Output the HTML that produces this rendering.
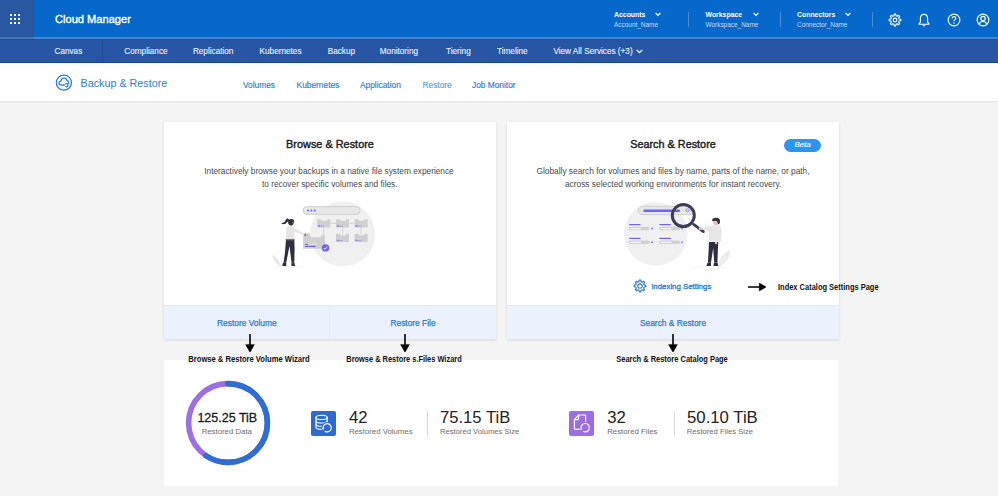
<!DOCTYPE html>
<html><head><meta charset="utf-8"><style>
html,body{margin:0;padding:0;width:998px;height:496px;overflow:hidden;background:#f4f4f4;position:relative;font-family:"Liberation Sans",sans-serif;}
div{font-family:"Liberation Sans",sans-serif;}
</style></head><body>
<div style="position:absolute;left:0px;top:0px;width:998px;height:37px;background:#0668cb;"></div>
<div style="position:absolute;left:0px;top:37px;width:998px;height:2px;background:#3f86d4;"></div>
<div style="position:absolute;left:0px;top:0px;width:34px;height:37px;background:#2a57a1;"></div>
<div style="position:absolute;left:0px;top:37px;width:34px;height:2px;background:#4a74b0;"></div>
<div style="position:absolute;left:10px;top:14px;width:2.2px;height:2.2px;background:#fff;border-radius:0.3px;"></div>
<div style="position:absolute;left:10px;top:18px;width:2.2px;height:2.2px;background:#fff;border-radius:0.3px;"></div>
<div style="position:absolute;left:10px;top:22px;width:2.2px;height:2.2px;background:#fff;border-radius:0.3px;"></div>
<div style="position:absolute;left:14px;top:14px;width:2.2px;height:2.2px;background:#fff;border-radius:0.3px;"></div>
<div style="position:absolute;left:14px;top:18px;width:2.2px;height:2.2px;background:#fff;border-radius:0.3px;"></div>
<div style="position:absolute;left:14px;top:22px;width:2.2px;height:2.2px;background:#fff;border-radius:0.3px;"></div>
<div style="position:absolute;left:18px;top:14px;width:2.2px;height:2.2px;background:#fff;border-radius:0.3px;"></div>
<div style="position:absolute;left:18px;top:18px;width:2.2px;height:2.2px;background:#fff;border-radius:0.3px;"></div>
<div style="position:absolute;left:18px;top:22px;width:2.2px;height:2.2px;background:#fff;border-radius:0.3px;"></div>
<div style="position:absolute;top:14.00px;font-size:11.1px;line-height:11.1px;color:#fff;font-weight:normal;white-space:nowrap;left:55.00px;-webkit-text-stroke:0.35px #fff;">Cloud Manager</div>
<div style="position:absolute;top:11.66px;font-size:6.9px;line-height:6.9px;color:#fff;font-weight:bold;white-space:nowrap;left:614.00px;">Accounts</div>
<div style="position:absolute;top:22.14px;font-size:6.45px;line-height:6.45px;color:#c9dcf3;font-weight:normal;white-space:nowrap;left:614.00px;">Account_Name</div>
<svg style="position:absolute;left:654.5px;top:11.5px" width="6" height="5" viewBox="0 0 6 5"><path d="M0.6 1 L3 3.4 L5.4 1" fill="none" stroke="#fff" stroke-width="1.2"/></svg>
<div style="position:absolute;top:11.66px;font-size:6.9px;line-height:6.9px;color:#fff;font-weight:bold;white-space:nowrap;left:705.50px;">Workspace</div>
<div style="position:absolute;top:22.14px;font-size:6.45px;line-height:6.45px;color:#c9dcf3;font-weight:normal;white-space:nowrap;left:705.50px;">Workspace_Name</div>
<svg style="position:absolute;left:752.5px;top:11.5px" width="6" height="5" viewBox="0 0 6 5"><path d="M0.6 1 L3 3.4 L5.4 1" fill="none" stroke="#fff" stroke-width="1.2"/></svg>
<div style="position:absolute;top:11.66px;font-size:6.9px;line-height:6.9px;color:#fff;font-weight:bold;white-space:nowrap;left:797.00px;">Connectors</div>
<div style="position:absolute;top:22.14px;font-size:6.45px;line-height:6.45px;color:#c9dcf3;font-weight:normal;white-space:nowrap;left:797.00px;">Connector_Name</div>
<svg style="position:absolute;left:845px;top:11.5px" width="6" height="5" viewBox="0 0 6 5"><path d="M0.6 1 L3 3.4 L5.4 1" fill="none" stroke="#fff" stroke-width="1.2"/></svg>
<div style="position:absolute;left:688px;top:12px;width:1px;height:15px;background:#4f8bd3;"></div>
<div style="position:absolute;left:780px;top:12px;width:1px;height:15px;background:#4f8bd3;"></div>
<div style="position:absolute;left:871.5px;top:12px;width:1px;height:15px;background:#4f8bd3;"></div>
<svg style="position:absolute;left:886.8px;top:11.7px" width="16" height="16" viewBox="-8 -8 16 16"><path d="M-1.07 -4.16 L-0.78 -5.85 L0.78 -5.85 L1.07 -4.16 L2.19 -3.70 L3.58 -4.69 L4.69 -3.58 L3.70 -2.19 L4.16 -1.07 L5.85 -0.78 L5.85 0.78 L4.16 1.07 L3.70 2.19 L4.69 3.58 L3.58 4.69 L2.19 3.70 L1.07 4.16 L0.78 5.85 L-0.78 5.85 L-1.07 4.16 L-2.19 3.70 L-3.58 4.69 L-4.69 3.58 L-3.70 2.19 L-4.16 1.07 L-5.85 0.78 L-5.85 -0.78 L-4.16 -1.07 L-3.70 -2.19 L-4.69 -3.58 L-3.58 -4.69 L-2.19 -3.70 Z" fill="none" stroke="#fff" stroke-width="1.1" stroke-linejoin="round"/><circle cx="0" cy="0" r="1.9" fill="none" stroke="#fff" stroke-width="1.1"/></svg>
<svg style="position:absolute;left:916.3px;top:11.7px" width="16" height="16" viewBox="-8 -8 16 16"><path d="M0 -5.6 C-2.6 -5.6 -3.6 -3.6 -3.6 -1.3 V1.8 C-3.6 2.6 -4.4 3.2 -5 3.6 V4.2 H5 V3.6 C4.4 3.2 3.6 2.6 3.6 1.8 V-1.3 C3.6 -3.6 2.6 -5.6 0 -5.6 Z" fill="none" stroke="#fff" stroke-width="1.1" stroke-linejoin="round"/><path d="M-1.3 5.4 Q0 6.6 1.3 5.4" fill="none" stroke="#fff" stroke-width="1"/><path d="M0 -6.3 V-5.6" stroke="#fff" stroke-width="1"/></svg>
<svg style="position:absolute;left:945.5px;top:11.7px" width="16" height="16" viewBox="-8 -8 16 16"><circle cx="0" cy="0" r="5.85" fill="none" stroke="#fff" stroke-width="1.1"/><path d="M-1.8 -1.5 C-1.8 -2.8 -1 -3.4 0 -3.4 C1 -3.4 1.8 -2.8 1.8 -1.7 C1.8 -0.4 0 -0.2 0 1.2" fill="none" stroke="#fff" stroke-width="1.05"/><circle cx="0" cy="3" r="0.65" fill="#fff"/></svg>
<svg style="position:absolute;left:974.7px;top:11.7px" width="16" height="16" viewBox="-8 -8 16 16"><circle cx="0" cy="0" r="5.85" fill="none" stroke="#fff" stroke-width="1.15"/><circle cx="0" cy="-1.5" r="2.2" fill="none" stroke="#fff" stroke-width="1.15"/><path d="M-3.9 4.3 C-3.2 2.4 -1.8 1.5 0 1.5 C1.8 1.5 3.2 2.4 3.9 4.3" fill="none" stroke="#fff" stroke-width="1.15"/></svg>
<div style="position:absolute;left:0px;top:39px;width:998px;height:24px;background:#2757a4;"></div>
<div style="position:absolute;left:0px;top:39px;width:998px;height:1px;background:#1f4f9b;"></div>
<div style="position:absolute;left:0px;top:62px;width:998px;height:1px;background:#13439a;"></div>
<div style="position:absolute;left:102px;top:39px;width:1px;height:23px;background:#1e4c93;"></div>
<div style="position:absolute;top:47.86px;font-size:8.2px;line-height:8.2px;color:#e9f0fa;font-weight:normal;white-space:nowrap;left:54.50px;-webkit-text-stroke:0.12px #e9f0fa;">Canvas</div>
<div style="position:absolute;top:47.86px;font-size:8.2px;line-height:8.2px;color:#e9f0fa;font-weight:normal;white-space:nowrap;left:124.30px;-webkit-text-stroke:0.12px #e9f0fa;">Compliance</div>
<div style="position:absolute;top:47.86px;font-size:8.2px;line-height:8.2px;color:#e9f0fa;font-weight:normal;white-space:nowrap;left:192.90px;-webkit-text-stroke:0.12px #e9f0fa;">Replication</div>
<div style="position:absolute;top:47.86px;font-size:8.2px;line-height:8.2px;color:#e9f0fa;font-weight:normal;white-space:nowrap;left:259.60px;-webkit-text-stroke:0.12px #e9f0fa;">Kubernetes</div>
<div style="position:absolute;top:47.86px;font-size:8.2px;line-height:8.2px;color:#e9f0fa;font-weight:normal;white-space:nowrap;left:327.70px;-webkit-text-stroke:0.12px #e9f0fa;">Backup</div>
<div style="position:absolute;top:47.86px;font-size:8.2px;line-height:8.2px;color:#e9f0fa;font-weight:normal;white-space:nowrap;left:379.80px;-webkit-text-stroke:0.12px #e9f0fa;">Monitoring</div>
<div style="position:absolute;top:47.86px;font-size:8.2px;line-height:8.2px;color:#e9f0fa;font-weight:normal;white-space:nowrap;left:446.00px;-webkit-text-stroke:0.12px #e9f0fa;">Tiering</div>
<div style="position:absolute;top:47.86px;font-size:8.2px;line-height:8.2px;color:#e9f0fa;font-weight:normal;white-space:nowrap;left:497.00px;-webkit-text-stroke:0.12px #e9f0fa;">Timeline</div>
<div style="position:absolute;top:47.86px;font-size:8.2px;line-height:8.2px;color:#e9f0fa;font-weight:normal;white-space:nowrap;left:553.40px;-webkit-text-stroke:0.12px #e9f0fa;">View All Services (+3)</div>
<svg style="position:absolute;left:636px;top:48.5px" width="7" height="5" viewBox="0 0 7 5"><path d="M0.7 0.9 L3.5 3.7 L6.3 0.9" fill="none" stroke="#fff" stroke-width="1.3"/></svg>
<div style="position:absolute;left:0px;top:63px;width:998px;height:38px;background:#fff;box-shadow:0 1px 2px rgba(0,0,0,0.08);"></div>
<svg style="position:absolute;left:54.5px;top:73.5px" width="18" height="18" viewBox="54.5 73.5 18 18"><g fill="none" stroke="#2d7dd6" stroke-width="1.25" stroke-linecap="round"><circle cx="63.4" cy="82.2" r="7.55"/><path d="M63.3 84.6 H60.6 C59.3 84.6 58.5 83.7 58.5 82.6 C58.5 81.5 59.3 80.7 60.3 80.6 C60.6 78.8 61.8 77.5 63.4 77.5 C65 77.5 66.2 78.6 66.5 80.1 C67.5 80.2 68.2 81 68.2 82 C68.2 82.5 68 82.9 67.6 83.2"/><path d="M64.9 83.4 A1.6 1.6 0 1 1 65.3 86.2"/></g><circle cx="63.5" cy="84.6" r="0.85" fill="#2d7dd6"/></svg>
<div style="position:absolute;top:78.40px;font-size:10.75px;line-height:10.75px;color:#2d7dd6;font-weight:normal;white-space:nowrap;left:80.60px;">Backup &amp; Restore</div>
<div style="position:absolute;top:81.23px;font-size:8.35px;line-height:8.35px;color:#2f7bd2;font-weight:normal;white-space:nowrap;left:243.00px;-webkit-text-stroke:0.15px #2f7bd2;">Volumes</div>
<div style="position:absolute;top:81.23px;font-size:8.35px;line-height:8.35px;color:#2f7bd2;font-weight:normal;white-space:nowrap;left:296.60px;-webkit-text-stroke:0.15px #2f7bd2;">Kubernetes</div>
<div style="position:absolute;top:81.23px;font-size:8.35px;line-height:8.35px;color:#2f7bd2;font-weight:normal;white-space:nowrap;left:360.00px;-webkit-text-stroke:0.15px #2f7bd2;">Application</div>
<div style="position:absolute;top:81.23px;font-size:8.35px;line-height:8.35px;color:#55a1ea;font-weight:normal;white-space:nowrap;left:422.50px;-webkit-text-stroke:0.15px #55a1ea;">Restore</div>
<div style="position:absolute;top:81.23px;font-size:8.35px;line-height:8.35px;color:#2f7bd2;font-weight:normal;white-space:nowrap;left:472.00px;-webkit-text-stroke:0.15px #2f7bd2;">Job Monitor</div>
<div style="position:absolute;left:164px;top:122px;width:332px;height:217px;background:#fff;box-shadow:0 1px 3px rgba(0,0,0,0.12);"></div>
<div style="position:absolute;left:164px;top:305px;width:332px;height:34px;background:#ebf2fd;border-top:1px solid #e2e6ee;box-sizing:border-box;"></div>
<div style="position:absolute;left:507px;top:122px;width:332px;height:217px;background:#fff;box-shadow:0 1px 3px rgba(0,0,0,0.12);"></div>
<div style="position:absolute;left:507px;top:305px;width:332px;height:34px;background:#ebf2fd;border-top:1px solid #e2e6ee;box-sizing:border-box;"></div>
<div style="position:absolute;left:328.8px;top:306px;width:1.6px;height:33px;background:#e4e7ec;"></div>
<div style="position:absolute;top:139.17px;font-size:10.9px;line-height:10.9px;color:#1b1b1b;font-weight:normal;white-space:nowrap;left:180.00px;width:300px;text-align:center;-webkit-text-stroke:0.4px #1b1b1b;">Browse &amp; Restore</div>
<div style="position:absolute;top:167.37px;font-size:8.3px;line-height:8.3px;color:#4a4a4a;font-weight:normal;white-space:nowrap;left:164.00px;width:330px;text-align:center;">Interactively browse your backups in a native file system experience</div>
<div style="position:absolute;top:179.97px;font-size:8.3px;line-height:8.3px;color:#4a4a4a;font-weight:normal;white-space:nowrap;left:164.80px;width:330px;text-align:center;">to recover specific volumes and files.</div>
<div style="position:absolute;top:139.21px;font-size:10.85px;line-height:10.85px;color:#1b1b1b;font-weight:normal;white-space:nowrap;left:523.00px;width:300px;text-align:center;-webkit-text-stroke:0.4px #1b1b1b;">Search &amp; Restore</div>
<div style="position:absolute;left:784px;top:139px;width:36.5px;height:12.6px;background:#2c95f1;border-radius:7px;"></div>
<div style="position:absolute;top:141.41px;font-size:7.9px;line-height:7.9px;color:#fff;font-weight:normal;white-space:nowrap;left:782.50px;width:40px;text-align:center;font-style:italic;-webkit-text-stroke:0.1px #fff;">Beta</div>
<div style="position:absolute;top:167.33px;font-size:8.35px;line-height:8.35px;color:#4a4a4a;font-weight:normal;white-space:nowrap;left:508.00px;width:330px;text-align:center;">Globally search for volumes and files by name, parts of the name, or path,</div>
<div style="position:absolute;top:179.93px;font-size:8.35px;line-height:8.35px;color:#4a4a4a;font-weight:normal;white-space:nowrap;left:508.20px;width:330px;text-align:center;">across selected working environments for instant recovery.</div>
<div style="position:absolute;top:318.79px;font-size:8.4px;line-height:8.4px;color:#2e7dd4;font-weight:normal;white-space:nowrap;left:186.80px;width:120px;text-align:center;-webkit-text-stroke:0.25px #2a79d2;">Restore Volume</div>
<div style="position:absolute;top:318.79px;font-size:8.4px;line-height:8.4px;color:#2e7dd4;font-weight:normal;white-space:nowrap;left:353.00px;width:120px;text-align:center;-webkit-text-stroke:0.25px #2a79d2;">Restore File</div>
<div style="position:absolute;top:318.79px;font-size:8.4px;line-height:8.4px;color:#2e7dd4;font-weight:normal;white-space:nowrap;left:613.00px;width:120px;text-align:center;-webkit-text-stroke:0.25px #2a79d2;">Search &amp; Restore</div>
<svg style="position:absolute;left:631.6px;top:278.4px" width="16" height="16" viewBox="-8 -8 16 16"><path d="M-1.07 -4.16 L-0.78 -5.85 L0.78 -5.85 L1.07 -4.16 L2.19 -3.70 L3.58 -4.69 L4.69 -3.58 L3.70 -2.19 L4.16 -1.07 L5.85 -0.78 L5.85 0.78 L4.16 1.07 L3.70 2.19 L4.69 3.58 L3.58 4.69 L2.19 3.70 L1.07 4.16 L0.78 5.85 L-0.78 5.85 L-1.07 4.16 L-2.19 3.70 L-3.58 4.69 L-4.69 3.58 L-3.70 2.19 L-4.16 1.07 L-5.85 0.78 L-5.85 -0.78 L-4.16 -1.07 L-3.70 -2.19 L-4.69 -3.58 L-3.58 -4.69 L-2.19 -3.70 Z" fill="none" stroke="#2e7dd4" stroke-width="1.15" stroke-linejoin="round"/><circle cx="0" cy="0" r="2.2" fill="none" stroke="#2e7dd4" stroke-width="1.15"/></svg>
<div style="position:absolute;top:282.95px;font-size:7.85px;line-height:7.85px;color:#2b7bd3;font-weight:normal;white-space:nowrap;left:651.20px;-webkit-text-stroke:0.3px #2b7bd3;">Indexing Settings</div>
<svg style="position:absolute;left:747.5px;top:282.4px" width="18.700000000000045" height="10" viewBox="0 0 18.700000000000045 10"><path d="M0.5 5 H12.700000000000045" stroke="#000" stroke-width="1.6" stroke-linecap="round"/><path d="M11.200000000000045 1 L18.700000000000045 5 L11.200000000000045 9 Z" fill="#000" stroke="#000" stroke-width="0.3" stroke-linejoin="round"/></svg>
<div style="position:absolute;top:282.77px;font-size:8.3px;line-height:8.3px;color:#111;font-weight:bold;white-space:nowrap;left:777.90px;transform:scaleX(0.9013);transform-origin:left center;">Index Catalog Settings Page</div>
<div style="position:absolute;left:164px;top:360px;width:674px;height:126px;background:#fff;"></div>
<svg style="position:absolute;left:244.6px;top:333.6px" width="10" height="18.599999999999966" viewBox="0 0 10 18.599999999999966"><path d="M5 0.3 V11.599999999999966" stroke="#000" stroke-width="1.6" stroke-linecap="round"/><path d="M0.5 10.399999999999967 L5 18.599999999999966 L9.5 10.399999999999967 Z" fill="#000" stroke="#000" stroke-width="0.3" stroke-linejoin="round"/></svg>
<svg style="position:absolute;left:399.7px;top:333.6px" width="10" height="18.599999999999966" viewBox="0 0 10 18.599999999999966"><path d="M5 0.3 V11.599999999999966" stroke="#000" stroke-width="1.6" stroke-linecap="round"/><path d="M0.5 10.399999999999967 L5 18.599999999999966 L9.5 10.399999999999967 Z" fill="#000" stroke="#000" stroke-width="0.3" stroke-linejoin="round"/></svg>
<svg style="position:absolute;left:668.1px;top:333.6px" width="10" height="18.599999999999966" viewBox="0 0 10 18.599999999999966"><path d="M5 0.3 V11.599999999999966" stroke="#000" stroke-width="1.6" stroke-linecap="round"/><path d="M0.5 10.399999999999967 L5 18.599999999999966 L9.5 10.399999999999967 Z" fill="#000" stroke="#000" stroke-width="0.3" stroke-linejoin="round"/></svg>
<div style="position:absolute;top:354.79px;font-size:8.4px;line-height:8.4px;color:#111;font-weight:bold;white-space:nowrap;left:169.25px;width:160px;text-align:center;transform:scaleX(0.9069);transform-origin:center center;">Browse &amp; Restore Volume Wizard</div>
<div style="position:absolute;top:354.79px;font-size:8.4px;line-height:8.4px;color:#111;font-weight:bold;white-space:nowrap;left:324.05px;width:160px;text-align:center;transform:scaleX(0.8857);transform-origin:center center;">Browse &amp; Restore s.Files Wizard</div>
<div style="position:absolute;top:354.79px;font-size:8.4px;line-height:8.4px;color:#111;font-weight:bold;white-space:nowrap;left:592.40px;width:160px;text-align:center;transform:scaleX(0.8903);transform-origin:center center;">Search &amp; Restore Catalog Page</div>
<svg style="position:absolute;left:182.5px;top:378.2px" width="90" height="90" viewBox="0 0 90 90">
<circle cx="45" cy="45" r="39.4" fill="none" stroke="#9c6fe6" stroke-width="5.6"/>
<circle cx="45" cy="45" r="39.4" fill="none" stroke="#2e6dd3" stroke-width="5.6" stroke-dasharray="146.82 247.56" stroke-linecap="round" transform="rotate(-90 45 45)"/>
</svg>
<div style="position:absolute;top:411.62px;font-size:12.5px;line-height:12.5px;color:#1a1a1a;font-weight:normal;white-space:nowrap;left:177.30px;width:100px;text-align:center;-webkit-text-stroke:0.3px #1a1a1a;">125.25 TiB</div>
<div style="position:absolute;top:427.50px;font-size:7.8px;line-height:7.8px;color:#6e6e6e;font-weight:normal;white-space:nowrap;left:176.80px;width:100px;text-align:center;">Restored Data</div>
<div style="position:absolute;left:311px;top:410.7px;width:25.2px;height:25.2px;background:#2e6bd1;border-radius:2px;"></div>
<svg style="position:absolute;left:311px;top:410.7px" width="25.2" height="25.2" viewBox="0 0 25.2 25.2"><g fill="none" stroke="#fff" stroke-width="1.15" stroke-linecap="round"><ellipse cx="10.6" cy="6.4" rx="5.6" ry="2.1"/><path d="M5 6.4 V16.2 C5 17.4 7.5 18.3 10.6 18.3 C13.7 18.3 16.2 17.4 16.2 16.2 V6.4"/><path d="M5 9.9 C5 11.1 7.5 12 10.6 12 C13.7 12 16.2 11.1 16.2 9.9"/><path d="M5 13.2 C5 14.4 7.5 15.3 10.6 15.3 C13.7 15.3 16.2 14.4 16.2 13.2"/></g><circle cx="16.1" cy="16.7" r="5.6" fill="#2e6bd1"/><g fill="none" stroke="#fff" stroke-width="1.15" stroke-linecap="round"><path d="M12.2 17.6 A4.1 4.1 0 1 1 14.3 20.4"/></g><circle cx="12.1" cy="17.6" r="0.9" fill="#fff"/></svg>
<div style="position:absolute;top:410.06px;font-size:16.7px;line-height:16.7px;color:#222;font-weight:normal;white-space:nowrap;left:348.90px;">42</div>
<div style="position:absolute;top:427.60px;font-size:7.8px;line-height:7.8px;color:#6e6e6e;font-weight:normal;white-space:nowrap;left:348.90px;">Restored Volumes</div>
<div style="position:absolute;left:426.5px;top:410.7px;width:1px;height:25px;background:#d7d7d7;"></div>
<div style="position:absolute;top:410.14px;font-size:16.6px;line-height:16.6px;color:#222;font-weight:normal;white-space:nowrap;left:439.90px;transform:scaleX(1.0023);transform-origin:left center;">75.15 TiB</div>
<div style="position:absolute;top:427.72px;font-size:7.65px;line-height:7.65px;color:#6e6e6e;font-weight:normal;white-space:nowrap;left:439.90px;">Restored Volumes Size</div>
<div style="position:absolute;left:568.8px;top:410.7px;width:25.2px;height:25.2px;background:#9c6ee3;border-radius:2px;"></div>
<svg style="position:absolute;left:568.8px;top:410.7px" width="25.2" height="25.2" viewBox="0 0 25.2 25.2"><g fill="none" stroke="#fff" stroke-width="1.15" stroke-linejoin="round" stroke-linecap="round"><path d="M10.3 18.4 H6.3 C5.8 18.4 5.4 18 5.4 17.5 V8.6 L9.6 4 H15.7 C16.2 4 16.6 4.4 16.6 4.9 V10.8"/><path d="M5.6 8.6 H8.6 C9.2 8.6 9.6 8.2 9.6 7.6 V4.2"/></g><circle cx="16.2" cy="16.6" r="5.6" fill="#9c6ee3"/><g fill="none" stroke="#fff" stroke-width="1.15" stroke-linecap="round"><path d="M12.1 17.6 A4.2 4.2 0 1 1 14.5 20.5"/></g><circle cx="12.1" cy="17.8" r="0.9" fill="#fff"/></svg>
<div style="position:absolute;top:410.06px;font-size:16.7px;line-height:16.7px;color:#222;font-weight:normal;white-space:nowrap;left:607.20px;">32</div>
<div style="position:absolute;top:427.60px;font-size:7.8px;line-height:7.8px;color:#6e6e6e;font-weight:normal;white-space:nowrap;left:607.20px;">Restored Files</div>
<div style="position:absolute;left:674.3px;top:410.7px;width:1px;height:25px;background:#d7d7d7;"></div>
<div style="position:absolute;top:410.14px;font-size:16.6px;line-height:16.6px;color:#222;font-weight:normal;white-space:nowrap;left:686.80px;transform:scaleX(1.0094);transform-origin:left center;">50.10 TiB</div>
<div style="position:absolute;top:427.72px;font-size:7.65px;line-height:7.65px;color:#6e6e6e;font-weight:normal;white-space:nowrap;left:686.80px;">Restored Files Size</div>
<svg style="position:absolute;left:265px;top:195px" width="120" height="80" viewBox="265 195 120 80">
<circle cx="342.6" cy="234" r="32.4" fill="#f0f0f0"/>
<rect x="303" y="206.6" width="57.2" height="7.8" rx="3.9" fill="#e6e6e6" stroke="#cdcdcd" stroke-width="0.9"/>
<circle cx="308.1" cy="210.6" r="1" fill="#6c63ff"/><circle cx="311.4" cy="210.6" r="1" fill="#6c63ff"/><circle cx="314.7" cy="210.6" r="1" fill="#6c63ff"/>
<g stroke="#c8c8c8" stroke-width="0.7" fill="none">
<path d="M330 223.3 H336.2 M349 223.3 H354.8"/>
<path d="M323.5 227.3 V236 M342.5 227.3 V234 M361.1 227.3 V234"/>
</g>
<g fill="#cfcfcf">
<path d="M317.3 219.79999999999998 Q317.3 219.2 317.90000000000003 219.2 H321.1 L321.90000000000003 220.79999999999998 H326.90000000000003 L327.6 219.2 H329.8 Q330.3 219.2 330.3 219.79999999999998 V227.39999999999998 H317.3 Z"/>
<path d="M336 219.79999999999998 Q336 219.2 336.6 219.2 H339.8 L340.6 220.79999999999998 H345.6 L346.3 219.2 H348.5 Q349 219.2 349 219.79999999999998 V227.39999999999998 H336 Z"/>
<path d="M354.6 219.79999999999998 Q354.6 219.2 355.20000000000005 219.2 H358.40000000000003 L359.20000000000005 220.79999999999998 H364.20000000000005 L364.90000000000003 219.2 H367.1 Q367.6 219.2 367.6 219.79999999999998 V227.39999999999998 H354.6 Z"/>
<path d="M336 234.29999999999998 Q336 233.7 336.6 233.7 H339.8 L340.6 235.29999999999998 H345.6 L346.3 233.7 H348.5 Q349 233.7 349 234.29999999999998 V241.89999999999998 H336 Z"/>
<path d="M354.6 234.29999999999998 Q354.6 233.7 355.20000000000005 233.7 H358.40000000000003 L359.20000000000005 235.29999999999998 H364.20000000000005 L364.90000000000003 233.7 H367.1 Q367.6 233.7 367.6 234.29999999999998 V241.89999999999998 H354.6 Z"/>
<path d="M303.2 233.8 Q303.2 233.2 303.8 233.2 H309.6 L310.8 237.2 H320.3 L321.2 235.3 H324.4 Q325 235.3 325 235.9 V248.7 H303.2 Z"/>
</g>
<g fill="#6c63ff">
<rect x="318.2" y="225.29999999999998" width="1.8" height="1.1"/><rect x="318.2" y="225.79999999999998" width="6" height="0.8" fill="#9a94f7"/>
<rect x="336.9" y="225.29999999999998" width="1.8" height="1.1"/><rect x="336.9" y="225.79999999999998" width="6" height="0.8" fill="#9a94f7"/>
<rect x="355.5" y="225.29999999999998" width="1.8" height="1.1"/><rect x="355.5" y="225.79999999999998" width="6" height="0.8" fill="#9a94f7"/>
<rect x="336.9" y="239.79999999999998" width="1.8" height="1.1"/><rect x="336.9" y="240.29999999999998" width="6" height="0.8" fill="#9a94f7"/>
<rect x="355.5" y="239.79999999999998" width="1.8" height="1.1"/><rect x="355.5" y="240.29999999999998" width="6" height="0.8" fill="#9a94f7"/>
<rect x="304.6" y="242.9" width="12" height="4.9" fill="#d8d8d8"/><rect x="305" y="243.8" width="3" height="1.1"/><rect x="305" y="245.8" width="10.8" height="1.2"/>
<circle cx="325.5" cy="247.9" r="3.7"/>
</g>
<path d="M323.6 248 l1.3 1.3 l2.4 -2.6" stroke="#fff" stroke-width="0.9" fill="none"/>
<!-- woman -->
<path d="M273 267 H305" stroke="#ececec" stroke-width="0.6"/>
<path d="M281.5 267 C276 265 271.5 258 273.2 254.2 C276 257 280 261 281.5 267 Z" fill="#e9e9e9"/>
<path d="M286 239.5 L285 252 L283.6 262.5 L286.2 262.8 L289.5 246 L291.6 262.8 L294.3 262.6 L294.6 248 L294.3 239.5 Z" fill="#2f2e41"/>
<path d="M282 265.8 L283.2 262.4 L286.3 262.6 L286.2 266.3 Z" fill="#2f2e41"/>
<path d="M291.2 265.8 L291.6 262.6 L294.4 262.6 L295.2 266.3 Z" fill="#2f2e41"/>
<path d="M285.6 239.8 L286.2 228 C287 226 289 225.6 291 225.7 C293 225.8 294 226.4 294.4 228 L304.8 233.8 L304.2 235.6 L294.4 231.5 L294.6 239.8 Z" fill="#e6e6e6"/>
<rect x="285.8" y="239" width="8.7" height="1.3" fill="#a0616a"/>
<circle cx="305.3" cy="235" r="1.1" fill="#a0616a"/>
<circle cx="291.3" cy="222.3" r="2.9" fill="#a0616a"/>
<path d="M288.2 222.2 C288.2 219.6 289.6 218.9 291.4 218.9 C293.3 218.9 294.4 220.1 294.2 221.8 L292.6 221.6 L292.4 225.4 L289.6 225.2 C288.7 224.4 288.2 223.4 288.2 222.2 Z" fill="#2f2e41"/>
<path d="M289.4 220.2 C288.4 218.3 286.6 217.9 285.8 219.8 C285 221.8 283.4 223.2 281 223.3 C283 224.9 285.8 224.2 287 222.3 C287.6 221.3 288.5 221.3 289.2 221.9 Z" fill="#2f2e41"/>
</svg>
<svg style="position:absolute;left:615px;top:195px" width="120" height="80" viewBox="615 195 120 80">
<circle cx="655.8" cy="233.9" r="31.8" fill="#f0f0f0"/>
<rect x="638.3" y="206.3" width="56" height="8.4" rx="4.2" fill="#e6e6e6" stroke="#cdcdcd" stroke-width="0.9"/>
<rect x="643.3" y="209.4" width="36.8" height="2.7" rx="1.35" fill="#6c63ff"/>
<circle cx="687.5" cy="210.4" r="1.5" fill="none" stroke="#6c63ff" stroke-width="0.7"/>
<g fill="#6c63ff">
<rect x="629.2" y="224" width="11.3" height="1.2"/><rect x="659.5" y="224" width="11.3" height="1.2"/>
<rect x="629.2" y="237.8" width="11.3" height="1.2"/><rect x="659.5" y="237.8" width="11.3" height="1.2"/>
<rect x="651.4" y="227.8" width="1.5" height="1.5"/><rect x="681.3" y="227.8" width="1.5" height="1.5"/>
<rect x="651.4" y="241.6" width="1.5" height="1.5"/><rect x="681.3" y="241.6" width="1.5" height="1.5"/>
</g>
<g fill="#d0d0d0">
<rect x="628.7" y="226.8" width="20.9" height="3.5" rx="1.75"/><rect x="659" y="226.8" width="21" height="3.5" rx="1.75"/>
<rect x="628.7" y="240.6" width="20.9" height="3.5" rx="1.75"/><rect x="659" y="240.6" width="21" height="3.5" rx="1.75"/>
</g>
<g fill="#f6f6f6">
<rect x="630" y="227.9" width="11.2" height="1.4" rx="0.7"/><rect x="660.3" y="227.9" width="11.2" height="1.4" rx="0.7"/>
<rect x="630" y="241.7" width="11.2" height="1.4" rx="0.7"/><rect x="660.3" y="241.7" width="11.2" height="1.4" rx="0.7"/>
</g>
<path d="M690 267.3 H727.5" stroke="#ececec" stroke-width="0.6"/>
<path d="M719 266.5 C718 260 722 254 729.5 250 C731 256 727 263 719 266.5 Z" fill="#ececec"/>
<circle cx="683.3" cy="215.55" r="11" fill="none" stroke="#3f3d56" stroke-width="3"/>
<path d="M693.6 224.4 L703.4 231.6" stroke="#3f3d56" stroke-width="2.8" stroke-linecap="round"/>
<!-- man -->
<path d="M709 242 L708 262.6 L711 262.6 L713.2 248 L714.2 262.6 L717.4 262.6 L718.2 242 Z" fill="#2f2e41"/>
<path d="M706.3 266 L707.6 262.4 L711 262.4 L711 266 Z M713.4 266 L714 262.4 L717.5 262.4 L718.4 266 Z" fill="#2f2e41"/>
<path d="M708.8 241.6 L709.2 232 L704 229.8 L701 229.6 L701.2 227.4 L704.5 227 L711.5 225.4 L716 225.1 C719.5 225.3 721.6 227 721.6 231 L721 241.6 Z" fill="#e6e6e6"/>
<circle cx="700.3" cy="228.4" r="1.5" fill="#ffb8b8"/>
<circle cx="716" cy="243" r="1.2" fill="#ffb8b8"/>
<circle cx="716.2" cy="222.2" r="3" fill="#ffb8b8"/>
<path d="M712.2 221 C711.8 218.3 714 217.5 716.5 217.8 C719.5 218 720.5 220 719.8 223 C719.3 224.5 718.4 224.3 717.8 223.6 C717.8 222 717 220.6 715 220.8 C713.8 221 713 221.4 712.2 221 Z" fill="#2f2e41"/>
</svg>

</body></html>
